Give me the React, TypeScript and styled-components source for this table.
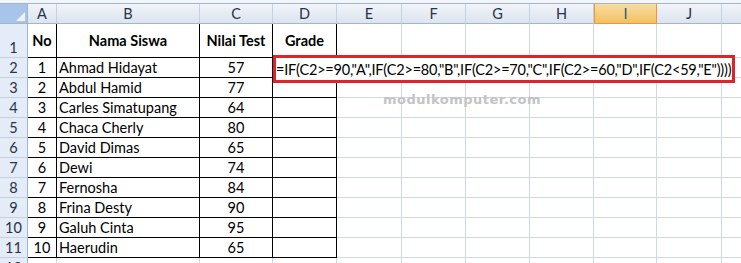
import React from 'react';
import styled, { createGlobalStyle, css } from 'styled-components';

const GlobalStyle = createGlobalStyle`
  html, body {
    margin: 0;
    padding: 0;
    background: #ffffff;
    overflow: hidden;
  }
  body {
    font-family: Lato, "Liberation Sans", sans-serif;
  }
`;

const columns = [
  { key: 'A', width: 29 },
  { key: 'B', width: 143 },
  { key: 'C', width: 73 },
  { key: 'D', width: 64 },
  { key: 'E', width: 65 },
  { key: 'F', width: 64 },
  { key: 'G', width: 64 },
  { key: 'H', width: 64 },
  { key: 'I', width: 63, selected: true },
  { key: 'J', width: 65 },
  { key: 'K', width: 64 },
];

const students = [
  { no: 1, name: 'Ahmad Hidayat', score: 57 },
  { no: 2, name: 'Abdul Hamid', score: 77 },
  { no: 3, name: 'Carles Simatupang', score: 64 },
  { no: 4, name: 'Chaca Cherly', score: 80 },
  { no: 5, name: 'David Dimas', score: 65 },
  { no: 6, name: 'Dewi', score: 74 },
  { no: 7, name: 'Fernosha', score: 84 },
  { no: 8, name: 'Frina Desty', score: 90 },
  { no: 9, name: 'Galuh Cinta', score: 95 },
  { no: 10, name: 'Haerudin', score: 65 },
];

const formula = '=IF(C2>=90,"A",IF(C2>=80,"B",IF(C2>=70,"C",IF(C2>=60,"D",IF(C2<59,"E")))))';

const Sheet = styled.div`
  position: relative;
  width: 741px;
  height: 263px;
  overflow: hidden;
  border-top: 3px solid #f3f5f8;
  box-sizing: border-box;
`;

const Grid = styled.div`
  display: grid;
  grid-template-columns: 28px ${columns.map((c) => `${c.width}px`).join(' ')};
  grid-template-rows: 20px 34px repeat(11, 20px);
  border-top: 1px solid #9eb6ce;
`;

const Corner = styled.div`
  background: #a9c4e9;
  border-right: 1px solid #9eb6ce;
  border-bottom: 1px solid #9eb6ce;
  box-sizing: border-box;
  display: flex;
  align-items: flex-end;
  justify-content: flex-end;
  padding: 0 2px 2px 0;
`;

const ColHeader = styled.div<{ $selected?: boolean }>`
  box-sizing: border-box;
  display: flex;
  align-items: center;
  justify-content: center;
  font-size: 14.5px;
  color: #27334a;
  background: linear-gradient(#f1f4f9, #dce4ef);
  border-right: 1px solid #c5d1e0;
  border-bottom: 1px solid #9eb6ce;
  ${(p) =>
    p.$selected &&
    css`
      background: linear-gradient(#f9dca3, #f1c15f);
      border: 1px solid #f29536;
      border-top: none;
      color: #1f5d7a;
    `}
`;

const RowHeader = styled.div<{ $tall?: boolean }>`
  box-sizing: border-box;
  display: flex;
  align-items: ${(p) => (p.$tall ? 'flex-end' : 'center')};
  justify-content: center;
  font-size: 14.5px;
  line-height: 19px;
  color: #27334a;
  background: #e4ecf7;
  border-right: 1px solid #9eb6ce;
  border-bottom: 1px solid #c5d1e0;
`;

const Cell = styled.div<{ $align?: 'left' | 'center'; $bold?: boolean; $boxed?: boolean }>`
  box-sizing: border-box;
  display: flex;
  align-items: center;
  justify-content: ${(p) => (p.$align === 'left' ? 'flex-start' : 'center')};
  padding: 0 2px;
  font-size: 14.5px;
  font-weight: ${(p) => (p.$bold ? 700 : 400)};
  color: #000;
  white-space: nowrap;
  border-right: 1px solid ${(p) => (p.$boxed ? '#000' : '#d0d7e5')};
  border-bottom: 1px solid ${(p) => (p.$boxed ? '#000' : '#d0d7e5')};
`;

const FormulaBox = styled.div`
  position: absolute;
  left: 273px;
  top: 52px;
  width: 462px;
  height: 28px;
  box-sizing: border-box;
  border: 3px solid #e4202b;
  background: #fff;
  display: flex;
  align-items: center;
  font-size: 14.5px;
  letter-spacing: -0.2px;
  white-space: nowrap;
  overflow: hidden;
`;

const Watermark = styled.div`
  position: absolute;
  left: 383px;
  top: 89px;
  font-family: "DejaVu Sans", Verdana, sans-serif;
  font-weight: 700;
  font-size: 13px;
  letter-spacing: 0.5px;
  color: #c3c3c3;
  pointer-events: none;
`;

const CornerMark = () => (
  <svg width="9" height="9" viewBox="0 0 9 9">
    <polygon points="9,0 9,9 0,9" fill="#eef3fa" />
  </svg>
);

export default function App() {
  const boxedCols = ['A', 'B', 'C', 'D'];

  const renderRow = (rowIndex: number, values: Record<string, React.ReactNode>, opts: { bold?: boolean } = {}) => (
    <React.Fragment key={rowIndex}>
      <RowHeader $tall={rowIndex === 1}>{rowIndex}</RowHeader>
      {columns.map((c) => (
        <Cell
          key={c.key}
          $align={c.key === 'B' && !opts.bold ? 'left' : 'center'}
          $bold={opts.bold}
          $boxed={rowIndex <= 11 && boxedCols.includes(c.key)}
        >
          {values[c.key]}
        </Cell>
      ))}
    </React.Fragment>
  );

  return (
    <>
      <GlobalStyle />
      <Sheet>
        <Grid>
          <Corner>
            <CornerMark />
          </Corner>
          {columns.map((c) => (
            <ColHeader key={c.key} $selected={c.selected}>
              {c.key}
            </ColHeader>
          ))}
          {renderRow(1, { A: 'No', B: 'Nama Siswa', C: 'Nilai Test', D: 'Grade' }, { bold: true })}
          {students.map((s, i) => renderRow(i + 2, { A: s.no, B: s.name, C: s.score }))}
          <RowHeader>12</RowHeader>
          {columns.map((c) => (
            <Cell key={c.key} />
          ))}
        </Grid>
        <FormulaBox>{formula}</FormulaBox>
        <Watermark>modulkomputer.com</Watermark>
      </Sheet>
    </>
  );
}
